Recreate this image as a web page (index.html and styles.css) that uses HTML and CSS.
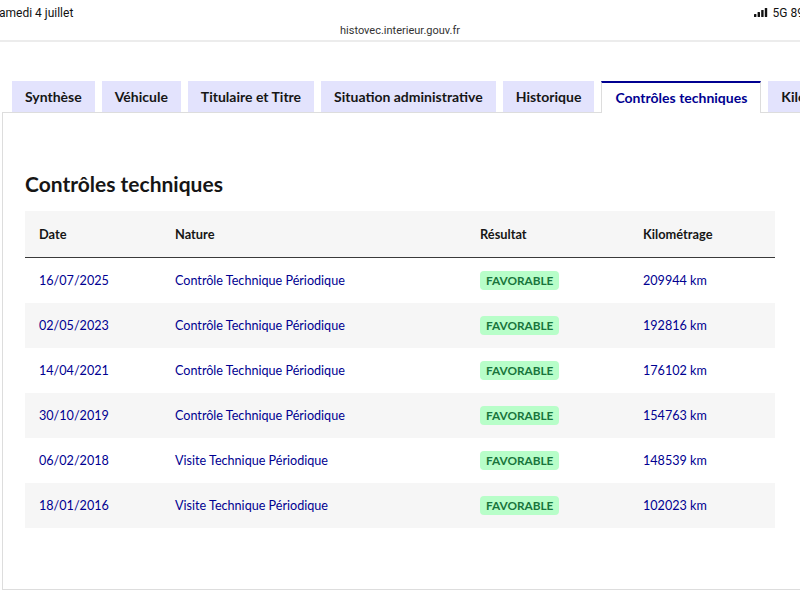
FILE: index.html
```html
<!DOCTYPE html>
<html lang="fr">

<head>
    <meta charset="UTF-8">
    <meta name="viewport" content="width=device-width, initial-scale=1.0">
    <title>HistoVec - Contrôles techniques</title>
    <link rel="stylesheet" href="styles.css">
</head>

<body>
    <div class="statusbar">
        <span class="time">amedi 4 juillet</span>
        <span class="net">
            <svg class="bars" width="14" height="9" viewBox="0 0 14 9">
                <rect x="0" y="6" width="2.4" height="3" rx="0.5" />
                <rect x="3.6" y="4" width="2.4" height="5" rx="0.5" />
                <rect x="7.2" y="2" width="2.4" height="7" rx="0.5" />
                <rect x="10.8" y="0" width="2.4" height="9" rx="0.5" />
            </svg>
            5G 89
        </span>
    </div>
    <div class="urlbar">histovec.interieur.gouv.fr</div>

    <main class="page">
        <ul class="tabs">
            <li class="tab">Synthèse</li>
            <li class="tab">Véhicule</li>
            <li class="tab">Titulaire et Titre</li>
            <li class="tab">Situation administrative</li>
            <li class="tab">Historique</li>
            <li class="tab active">Contrôles techniques</li>
            <li class="tab">Kilométrage</li>
        </ul>

        <section class="panel">
            <h2>Contrôles techniques</h2>
            <table class="ct-table">
                <thead>
                    <tr>
                        <th class="col-date">Date</th>
                        <th class="col-nature">Nature</th>
                        <th class="col-result">Résultat</th>
                        <th>Kilométrage</th>
                    </tr>
                </thead>
                <tbody>
                    <tr>
                        <td>16/07/2025</td>
                        <td>Contrôle Technique Périodique</td>
                        <td><span class="badge">Favorable</span></td>
                        <td>209944 km</td>
                    </tr>
                    <tr>
                        <td>02/05/2023</td>
                        <td>Contrôle Technique Périodique</td>
                        <td><span class="badge">Favorable</span></td>
                        <td>192816 km</td>
                    </tr>
                    <tr>
                        <td>14/04/2021</td>
                        <td>Contrôle Technique Périodique</td>
                        <td><span class="badge">Favorable</span></td>
                        <td>176102 km</td>
                    </tr>
                    <tr>
                        <td>30/10/2019</td>
                        <td>Contrôle Technique Périodique</td>
                        <td><span class="badge">Favorable</span></td>
                        <td>154763 km</td>
                    </tr>
                    <tr>
                        <td>06/02/2018</td>
                        <td>Visite Technique Périodique</td>
                        <td><span class="badge">Favorable</span></td>
                        <td>148539 km</td>
                    </tr>
                    <tr>
                        <td>18/01/2016</td>
                        <td>Visite Technique Périodique</td>
                        <td><span class="badge">Favorable</span></td>
                        <td>102023 km</td>
                    </tr>
                </tbody>
            </table>
        </section>
    </main>
</body>

</html>
```

FILE: styles.css
```css
body {
    margin: 0;
    font-family: Lato, "Open Sans", Arial, sans-serif;
    background-color: #fff;
    color: #161616;
    overflow: hidden;
}

/* top of the tablet browser */
.statusbar {
    display: flex;
    justify-content: space-between;
    align-items: center;
    height: 25px;
    font-family: Roboto, "Liberation Sans", sans-serif;
    font-size: 12px;
    color: #111;
}

.time {
    margin-left: -1px;
}

.net {
    display: flex;
    align-items: center;
    gap: 5px;
    margin-right: -4px;
}

.bars {
    fill: #111;
}

.urlbar {
    height: 15px;
    line-height: 11px;
    text-align: center;
    font-family: Roboto, "Liberation Sans", sans-serif;
    font-size: 11px;
    color: #333;
    border-bottom: 2px solid #ececec;
}

.page {
    padding-top: 39px;
    padding-left: 2px;
}

.tabs {
    display: flex;
    gap: 7px;
    list-style: none;
    margin: 0;
    padding: 0 0 0 10px;
    white-space: nowrap;
    position: relative;
    z-index: 1;
}

.tab {
    flex: none;
    height: 31px;
    line-height: 31px;
    padding: 0 13px;
    background-color: #e3e3fd;
    font-weight: 700;
    font-size: 14px;
    color: #161616;
}

.tab.active {
    background-color: #fff;
    color: #000091;
    border-top: 2px solid #000091;
    border-left: 1px solid #ddd;
    border-right: 1px solid #ddd;
    height: 30px;
    line-height: 30px;
    margin-bottom: -1px;
}

.panel {
    border: 1px solid #ddd;
    border-right: none;
    height: 478px;
    padding: 0 0 0 22px;
    width: 800px;
    box-sizing: border-box;
}

.panel h2 {
    margin: 58px 0 0 0;
    font-size: 21px;
    font-weight: 700;
    line-height: 26px;
}

.ct-table {
    margin-top: 14px;
    width: 750px;
    border-collapse: collapse;
    font-size: 12.6px;
}

.ct-table th {
    text-align: left;
    height: 46px;
    padding: 0 14px;
    background-color: #f6f6f6;
    border-bottom: 1px solid #3a3a3a;
    font-weight: 700;
    font-size: 12.8px;
    color: #161616;
}

.ct-table td {
    height: 45px;
    padding: 0 14px;
    color: #000091;
}

.ct-table tbody tr:nth-child(even) td {
    background-color: #f6f6f6;
}

.col-date {
    width: 108px;
}

.col-nature {
    width: 277px;
}

.col-result {
    width: 135px;
}

.badge {
    display: inline-block;
    padding: 0 6px;
    line-height: 19px;
    border-radius: 4px;
    background-color: #b8fec9;
    color: #18753c;
    font-weight: 700;
    font-size: 11.8px;
    text-transform: uppercase;
    letter-spacing: 0;
}
```
